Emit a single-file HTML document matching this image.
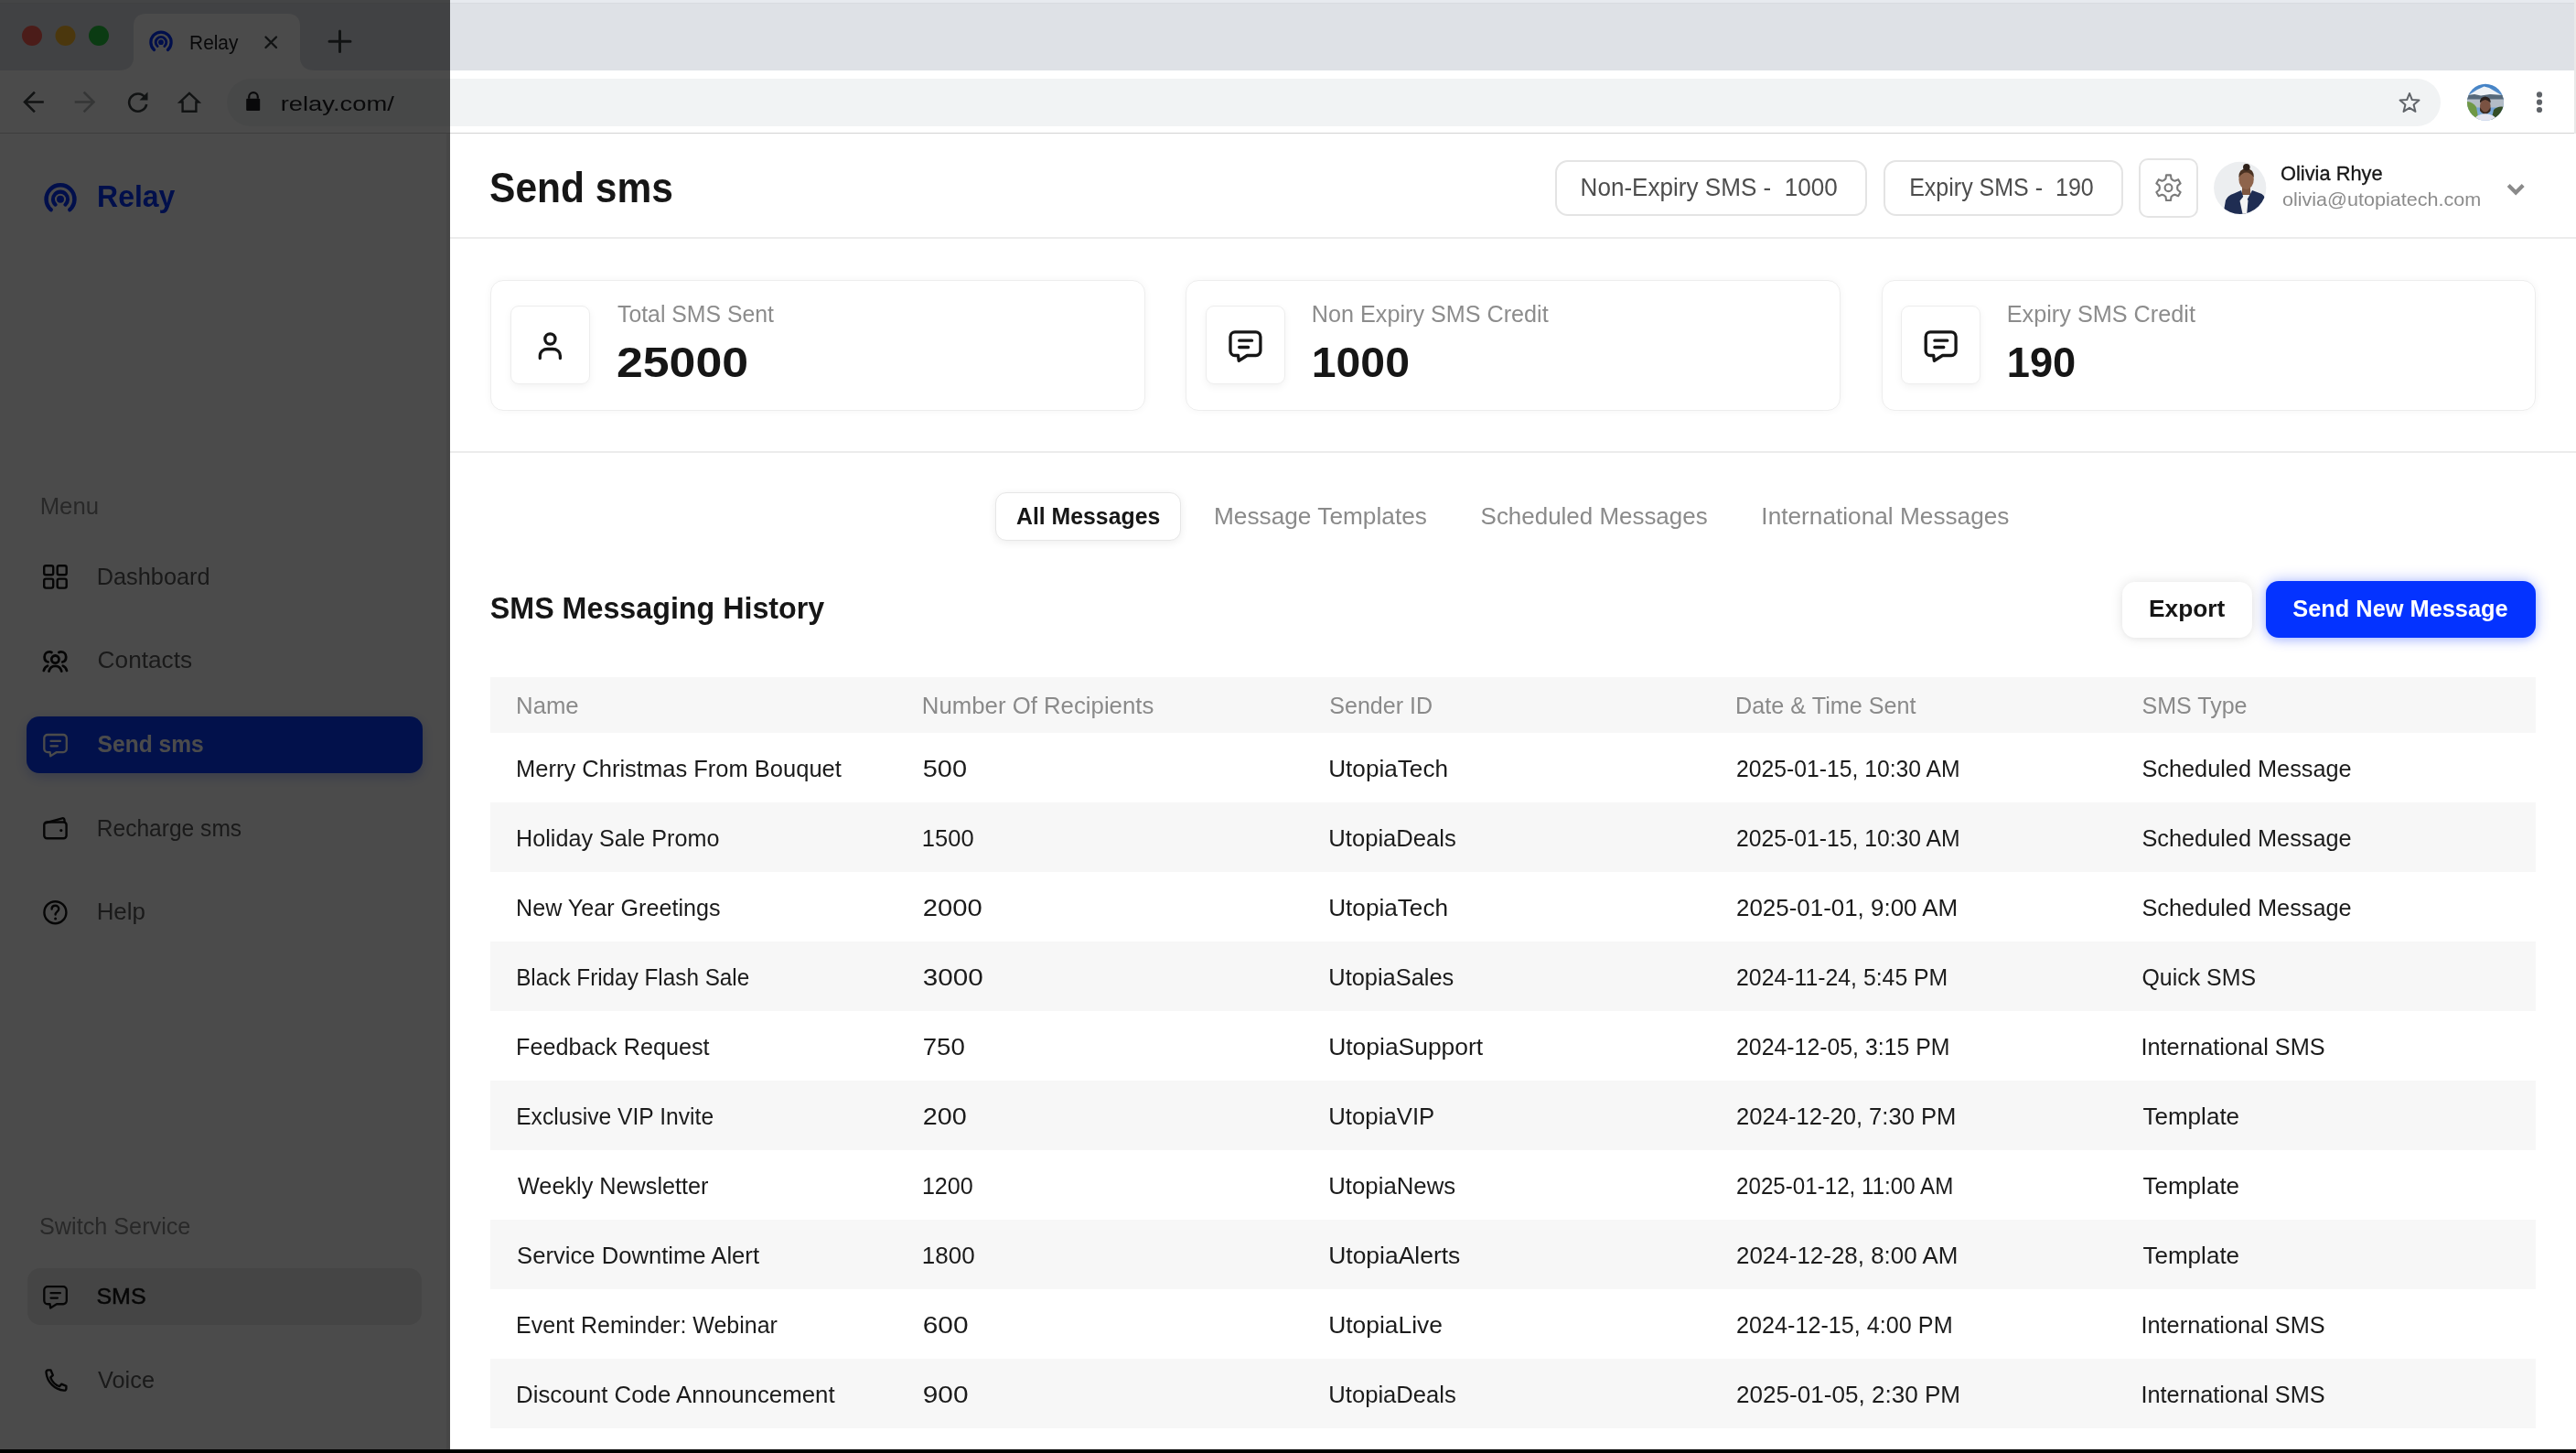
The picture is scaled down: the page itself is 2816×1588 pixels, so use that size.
<!DOCTYPE html>
<html><head><meta charset="utf-8">
<style>
html,body{margin:0;padding:0;width:2816px;height:1588px;overflow:hidden;background:#fff;font-family:"Liberation Sans",sans-serif;}
.a{position:absolute;box-sizing:border-box;}
#svg{position:absolute;left:0;top:0;will-change:transform;}
text{font-family:"Liberation Sans",sans-serif;}
</style></head><body>
<!-- browser chrome -->
<div class="a" style="left:0;top:0;width:2816px;height:77px;background:#dee1e6;"></div>
<div class="a" style="left:0;top:0;width:2816px;height:3px;background:#e7eaef;"></div><div class="a" style="left:0;top:3px;width:2816px;height:1px;background:#d8dbe0;"></div>
<div class="a" style="left:0;top:77px;width:2816px;height:69px;background:#ffffff;border-bottom:1px solid #d3d3d3;"></div>
<div class="a" style="left:248px;top:86px;width:2420px;height:52px;background:#f1f3f4;border-radius:26px;"></div>
<!-- tab -->
<svg class="a" style="left:130px;top:10px" width="215" height="70"><path d="M0 67 Q14 67 16 55 V19 Q16 5 30 5 H184 Q198 5 198 19 V55 Q200 67 214 67 V70 H0 Z" fill="#fff"/></svg>
<div class="a" style="left:2814px;top:0;width:2px;height:146px;background:#e9e9e9;"></div>
<!-- sidebar -->
<div class="a" style="left:0;top:146px;width:492px;height:1438px;background:#fff;border-right:4px solid #ececec;"></div>
<div class="a" style="left:29.3px;top:783px;width:432.7px;height:61.6px;background:#0a3cff;border-radius:14px;box-shadow:0 4px 14px rgba(4,51,255,0.25);"></div>
<div class="a" style="left:29.7px;top:1385.6px;width:431.3px;height:62.7px;background:#ebebeb;border-radius:14px;"></div>
<!-- header -->
<div class="a" style="left:492px;top:259px;width:2324px;height:1.5px;background:#ececec;"></div>
<div class="a" style="left:1699.8px;top:175px;width:341px;height:60.5px;border:2px solid #e4e4e4;border-radius:14px;"></div>
<div class="a" style="left:2058.6px;top:175px;width:262.2px;height:60.5px;border:2px solid #e4e4e4;border-radius:14px;"></div>
<div class="a" style="left:2338px;top:172.5px;width:64.6px;height:65.3px;border:2px solid #e4e4e4;border-radius:10px;"></div>
<!-- stat cards -->
<div class="a" style="left:535.5px;top:306px;width:716px;height:143px;border:1.5px solid #ededed;border-radius:14px;box-shadow:0 0 8px rgba(0,0,0,0.045);"></div>
<div class="a" style="left:1295.5px;top:306px;width:716px;height:143px;border:1.5px solid #ededed;border-radius:14px;box-shadow:0 0 8px rgba(0,0,0,0.045);"></div>
<div class="a" style="left:2056.5px;top:306px;width:715.5px;height:143px;border:1.5px solid #ededed;border-radius:14px;box-shadow:0 0 8px rgba(0,0,0,0.045);"></div>
<div class="a" style="left:558px;top:334.3px;width:86.5px;height:86px;border:1.5px solid #ededed;border-radius:9px;box-shadow:0 3px 8px rgba(0,0,0,0.05);"></div>
<div class="a" style="left:1318.2px;top:334.3px;width:86.5px;height:86px;border:1.5px solid #ededed;border-radius:9px;box-shadow:0 3px 8px rgba(0,0,0,0.05);"></div>
<div class="a" style="left:2078.4px;top:334.3px;width:86.5px;height:86px;border:1.5px solid #ededed;border-radius:9px;box-shadow:0 3px 8px rgba(0,0,0,0.05);"></div>
<div class="a" style="left:492px;top:493px;width:2324px;height:1.5px;background:#ececec;"></div>
<!-- tabs -->
<div class="a" style="left:1088px;top:537.5px;width:202.5px;height:53px;border:1.5px solid #e6e6e6;border-radius:12px;box-shadow:0 2px 10px rgba(0,0,0,0.075);background:#fff;"></div>
<!-- buttons -->
<div class="a" style="left:2320px;top:636px;width:142.3px;height:61px;border-radius:14px;background:#fff;box-shadow:0 0 14px rgba(0,0,0,0.11), 0 2px 4px rgba(0,0,0,0.03);"></div>
<div class="a" style="left:2477.3px;top:635.4px;width:294.9px;height:61.3px;border-radius:14px;background:#0433ff;box-shadow:0 0 16px rgba(4,51,255,0.33), 0 3px 8px rgba(4,51,255,0.12);"></div>
<!-- table -->
<div class="a" style="left:536px;top:740.3px;width:2236px;height:61px;background:#f7f7f7;"></div>
<div class="a" style="left:536px;top:877px;width:2236px;height:76px;background:#f7f7f7;"></div>
<div class="a" style="left:536px;top:1029px;width:2236px;height:76px;background:#f7f7f7;"></div>
<div class="a" style="left:536px;top:1181px;width:2236px;height:76px;background:#f7f7f7;"></div>
<div class="a" style="left:536px;top:1333px;width:2236px;height:76px;background:#f7f7f7;"></div>
<div class="a" style="left:536px;top:1485px;width:2236px;height:76px;background:#f7f7f7;"></div>

<svg id="svg" width="2816" height="1588" viewBox="0 0 2816 1588">
<circle cx="35" cy="39" r="11" fill="#ff5f57"/>
<circle cx="71.5" cy="39" r="11" fill="#febc2e"/>
<circle cx="108" cy="39" r="11" fill="#28c840"/>
<g fill="none" stroke="#0433ff" stroke-linecap="round"><path d="M168.56 54.47 A11.12 11.12 0 1 1 183.44 54.47" stroke-width="3.24"/><path d="M172.12 50.51 A5.80 5.80 0 1 1 179.88 50.51" stroke-width="2.95"/></g><circle cx="176" cy="46.2" r="2.88" fill="#0433ff"/>
<g stroke="#3c4043" stroke-width="2.4" stroke-linecap="round"><path d="M290.5 40.5 L302 52 M302 40.5 L290.5 52"/></g>
<g stroke="#3c4043" stroke-width="3" stroke-linecap="round"><path d="M371.5 34 V56.5 M360 45.2 H383"/></g>
<g fill="none" stroke="#3c4043" stroke-width="2.6" stroke-linecap="square"><path d="M27.5 111.5 H46.5 M37 101.5 L27 111.5 L37 121.5"/></g>
<g fill="none" stroke="#b4b6b8" stroke-width="2.6" stroke-linecap="square"><path d="M83 111.5 H102 M92.5 101.5 L102.5 111.5 L92.5 121.5"/></g>
<g fill="none" stroke="#3c4043" stroke-width="2.6"><path d="M158.6 106.5 A9.6 9.6 0 1 0 160.2 114"/></g><path d="M161.5 100.5 V109.5 H152.5 Z" fill="#3c4043"/>
<g fill="none" stroke="#3c4043" stroke-width="2.4" stroke-linejoin="miter"><path d="M207 101.8 L196.8 111.5 H199.6 V121.8 H214.4 V111.5 H217.2 Z"/></g>
<path d="M272.2 107.8 V106 A4.8 4.8 0 0 1 281.8 106 V107.8" fill="none" stroke="#202124" stroke-width="2.2"/><rect x="269.2" y="107.8" width="15" height="13.1" rx="1" fill="#202124"/>
<polygon points="2634.00,102.00 2636.82,109.12 2644.46,109.60 2638.57,114.48 2640.47,121.90 2634.00,117.80 2627.53,121.90 2629.43,114.48 2623.54,109.60 2631.18,109.12" fill="none" stroke="#5f6368" stroke-width="2" stroke-linejoin="round"/>
<defs><clipPath id="cav"><circle cx="2717" cy="111.7" r="20"/></clipPath>
<clipPath id="uav"><circle cx="2448.7" cy="205.3" r="28.6"/></clipPath>
<linearGradient id="sky" x1="0" y1="0" x2="0" y2="1"><stop offset="0" stop-color="#3f7fc4"/><stop offset="1" stop-color="#8fb6de"/></linearGradient></defs>
<g clip-path="url(#cav)">
<rect x="2696" y="91" width="42" height="42" fill="url(#sky)"/>
<path d="M2697 105 L2708 98 L2715.5 94.5 L2721 96 L2737 105.5 V107 H2697 Z" fill="#eef2f6"/>
<path d="M2696 104 L2705 103 L2712 104.5 L2722 103 L2738 104 V109 H2696 Z" fill="#56697a"/>
<rect x="2696" y="108.5" width="42" height="9" fill="#b3bcc6"/>
<path d="M2696 111 Q2703 111 2707 117 L2710 133 H2696 Z" fill="#6f9846"/>
<path d="M2738 117 Q2731 115 2726 120 L2723 133 H2738 Z" fill="#344d26"/>
<ellipse cx="2716.8" cy="116" rx="5.8" ry="8.3" fill="#7a5242"/>
<path d="M2711 112.5 Q2710.5 106 2716.8 105.5 Q2723 106 2722.6 112.5 Q2719.5 109 2716.8 109 Q2714 109 2711 112.5 Z" fill="#2a201c"/>
<path d="M2711 117 Q2716.8 128 2722.6 117 L2722.6 121 Q2716.8 128.5 2711 121 Z" fill="#3a2a22"/>
<path d="M2703 134 Q2705 124.8 2716.8 124.3 Q2729 124.8 2731 134 Z" fill="#e4e4f0"/>
</g>
<circle cx="2776" cy="103.4" r="3.1" fill="#5f6368"/>
<circle cx="2776" cy="111.7" r="3.1" fill="#5f6368"/>
<circle cx="2776" cy="120" r="3.1" fill="#5f6368"/>
<polygon points="2365.70,196.89 2367.49,195.35 2368.07,191.41 2372.93,191.41 2373.51,195.35 2375.30,196.89 2377.52,197.67 2381.22,196.20 2383.66,200.41 2380.54,202.88 2380.10,205.20 2380.54,207.52 2383.66,209.99 2381.22,214.20 2377.52,212.73 2375.30,213.51 2373.51,215.05 2372.93,218.99 2368.07,218.99 2367.49,215.05 2365.70,213.51 2363.48,212.73 2359.78,214.20 2357.34,209.99 2360.46,207.52 2360.90,205.20 2360.46,202.88 2357.34,200.41 2359.78,196.20 2363.48,197.67" fill="none" stroke="#7a7a7a" stroke-width="2.1" stroke-linejoin="round"/>
<circle cx="2370.5" cy="205.2" r="3.9" fill="none" stroke="#7a7a7a" stroke-width="2.1"/>
<circle cx="2448.7" cy="205.3" r="28.6" fill="#eceef0"/>
<g clip-path="url(#uav)">
<rect x="2451" y="203" width="9" height="10" fill="#7e5640"/>
<ellipse cx="2455.6" cy="196" rx="8.2" ry="11" fill="#8e644c"/>
<path d="M2447.4 194 Q2447 184.5 2455.6 184.3 Q2464.2 184.5 2463.8 194 Q2460 188.5 2455.6 188.5 Q2451.2 188.5 2447.4 194 Z" fill="#4a3222"/>
<circle cx="2455.8" cy="182.8" r="3.8" fill="#2f221b"/>
<path d="M2430 236 L2433 219 Q2435 213.5 2442 211.5 L2450 208 L2454.5 222 L2462 208 L2470 211 Q2475.5 212.5 2477 219 L2476 236 Z" fill="#1f2d52"/>
<path d="M2448.5 219.5 L2452 236 L2456 236 L2457.5 219 L2453 214 Z" fill="#f3f3f3"/>
</g>
<path d="M2742.2 202.6 L2750.2 210.6 L2758.2 202.6" fill="none" stroke="#8a8a8a" stroke-width="4.2" stroke-linecap="butt" stroke-linejoin="miter"/>
<g transform="translate(601.4 370.5) scale(1)" fill="none" stroke="#161616" stroke-width="3.3" stroke-linecap="round"><circle cx="0" cy="0" r="5.6"/><path d="M-11.1 21 V18.5 C-11.1 14 -7.5 11 -2.5 11 H2.5 C7.5 11 11 14 11 18.5 V21"/></g>
<g transform="translate(1330 350) scale(1)" fill="none" stroke="#161616" stroke-width="3.3" stroke-linecap="round" stroke-linejoin="round"><path d="M33.3 38.5 H42.9 A5 5 0 0 0 47.9 33.5 V17.9 A5 5 0 0 0 42.9 12.9 H20 A5 5 0 0 0 15 17.9 V33.5 A5 5 0 0 0 20 38.5 H23.5 L24.2 44.3 Z"/><path d="M24.7 22.2 H38.6 M24.7 29.5 H34.6"/></g>
<g transform="translate(2090.2 350) scale(1)" fill="none" stroke="#161616" stroke-width="3.3" stroke-linecap="round" stroke-linejoin="round"><path d="M33.3 38.5 H42.9 A5 5 0 0 0 47.9 33.5 V17.9 A5 5 0 0 0 42.9 12.9 H20 A5 5 0 0 0 15 17.9 V33.5 A5 5 0 0 0 20 38.5 H23.5 L24.2 44.3 Z"/><path d="M24.7 22.2 H38.6 M24.7 29.5 H34.6"/></g>
<g transform="translate(-430.19999999999993 -1000) scale(1)" fill="none" stroke="#161616" stroke-width="3.3" stroke-linecap="round" stroke-linejoin="round"><path d="M33.3 38.5 H42.9 A5 5 0 0 0 47.9 33.5 V17.9 A5 5 0 0 0 42.9 12.9 H20 A5 5 0 0 0 15 17.9 V33.5 A5 5 0 0 0 20 38.5 H23.5 L24.2 44.3 Z"/><path d="M24.7 22.2 H38.6 M24.7 29.5 H34.6"/></g>
<g fill="none" stroke="#0433ff" stroke-linecap="round"><path d="M55.66 229.18 A15.45 15.45 0 1 1 76.34 229.18" stroke-width="4.50"/><path d="M60.61 223.68 A8.05 8.05 0 1 1 71.39 223.68" stroke-width="4.10"/></g><circle cx="66" cy="217.7" r="4.00" fill="#0433ff"/>
<g fill="none" stroke="#161616" stroke-width="2.4"><rect x="48.2" y="618.2" width="10" height="10" rx="2"/><rect x="62.7" y="618.2" width="10" height="10" rx="2"/><rect x="48.2" y="632.6" width="10" height="10" rx="2"/><rect x="62.7" y="632.6" width="10" height="10" rx="2"/></g>
<g fill="none" stroke="#161616" stroke-width="2.8" stroke-linecap="round"><circle cx="60.4" cy="720.6" r="4.1"/><path d="M53.5 733.6 C54.5 729.5 57 727.8 60.4 727.8 C63.8 727.8 66.3 729.5 67.3 733.6"/><path d="M52.6 723.5 C50 723 48.6 721 48.6 718 C48.6 714.5 51 712.4 54.2 712.4 C55 712.4 55.8 712.6 56.4 713"/><path d="M68.2 723.5 C70.8 723 72.2 721 72.2 718 C72.2 714.5 69.8 712.4 66.6 712.4 C65.8 712.4 65 712.6 64.4 713"/><path d="M47.8 733 C48.5 730.3 50 728.5 52 727.8 M73 733 C72.3 730.3 70.8 728.5 68.8 727.8"/></g>
<g transform="translate(37.125 793.3895) scale(0.745)" fill="none" stroke="#ffffff" stroke-width="3.1" stroke-linecap="round" stroke-linejoin="round"><path d="M33.3 38.5 H42.9 A5 5 0 0 0 47.9 33.5 V17.9 A5 5 0 0 0 42.9 12.9 H20 A5 5 0 0 0 15 17.9 V33.5 A5 5 0 0 0 20 38.5 H23.5 L24.2 44.3 Z"/><path d="M24.7 22.2 H38.6 M24.7 29.5 H34.6"/></g>
<g fill="none" stroke="#161616" stroke-width="2.4" stroke-linejoin="round"><rect x="48.3" y="898.5" width="24.3" height="17.7" rx="3"/><path d="M49.5 899.5 L68 894.3 C69.5 893.9 70.5 895 70.5 896.5 V898.5"/></g><circle cx="66.8" cy="907.6" r="1.6" fill="#161616"/>
<g fill="none" stroke="#161616" stroke-width="2.4" stroke-linecap="round"><circle cx="60.4" cy="997.2" r="12"/><path d="M56.6 993.6 C56.6 991.2 58.3 989.8 60.5 989.8 C62.7 989.8 64.3 991.3 64.3 993.3 C64.3 996.2 60.6 996.5 60.6 999.6"/></g><circle cx="60.6" cy="1004" r="1.5" fill="#161616"/>
<g transform="translate(37.125 1396.5895) scale(0.745)" fill="none" stroke="#161616" stroke-width="3.1" stroke-linecap="round" stroke-linejoin="round"><path d="M33.3 38.5 H42.9 A5 5 0 0 0 47.9 33.5 V17.9 A5 5 0 0 0 42.9 12.9 H20 A5 5 0 0 0 15 17.9 V33.5 A5 5 0 0 0 20 38.5 H23.5 L24.2 44.3 Z"/><path d="M24.7 22.2 H38.6 M24.7 29.5 H34.6"/></g>
<g fill="none" stroke="#161616" stroke-width="2.4" stroke-linejoin="round"><path d="M52.5 1497.4 L55.5 1497.4 L57.8 1503 L55.2 1505.3 C56.8 1509.8 60.6 1513.6 65 1515.2 L67.3 1512.6 L72.4 1514.8 L72.4 1517.6 C72.4 1519 71.2 1519.8 70 1519.6 C59.5 1518.5 51.6 1510.5 50.5 1500 C50.3 1498.6 51.2 1497.4 52.5 1497.4 Z"/></g>
<text transform="translate(207.08 53.60) scale(0.9202 1)" font-size="22.67" font-weight="400" fill="#202124">Relay</text>
<text transform="translate(306.70 120.90) scale(1.2005 1)" font-size="22.80" font-weight="400" fill="#202124">relay.com/</text>
<text transform="translate(535.09 220.50) scale(0.9085 1)" font-size="46.80" font-weight="700" fill="#161616">Send sms</text>
<text transform="translate(1727.58 213.50) scale(0.9603 1)" font-size="27.18" font-weight="400" fill="#4d4d4d" xml:space="preserve">Non-Expiry SMS -  1000</text>
<text transform="translate(2087.16 213.50) scale(0.9209 1)" font-size="27.18" font-weight="400" fill="#4d4d4d" xml:space="preserve">Expiry SMS -  190</text>
<text transform="translate(2492.98 197.00) scale(1.0160 1)" font-size="21.51" font-weight="400" fill="#161616" stroke="#161616" stroke-width="0.3">Olivia Rhye</text>
<text transform="translate(2494.90 224.70) scale(1.0527 1)" font-size="20.50" font-weight="400" fill="#8c8c8c">olivia@utopiatech.com</text>
<text transform="translate(675.00 352.30) scale(0.9706 1)" font-size="25.58" font-weight="400" fill="#8c8c8c">Total SMS Sent</text>
<text transform="translate(673.88 412.00) scale(1.1151 1)" font-size="46.51" font-weight="700" fill="#161616">25000</text>
<text transform="translate(1433.83 352.30) scale(0.9848 1)" font-size="25.58" font-weight="400" fill="#8c8c8c">Non Expiry SMS Credit</text>
<text transform="translate(1433.73 412.00) scale(1.0363 1)" font-size="46.51" font-weight="700" fill="#161616">1000</text>
<text transform="translate(2193.72 352.30) scale(0.9878 1)" font-size="25.58" font-weight="400" fill="#8c8c8c">Expiry SMS Credit</text>
<text transform="translate(2193.75 412.00) scale(0.9726 1)" font-size="46.51" font-weight="700" fill="#161616">190</text>
<text transform="translate(1111.00 572.50) scale(0.9652 1)" font-size="25.73" font-weight="700" fill="#161616">All Messages</text>
<text transform="translate(1326.96 572.50) scale(1.0206 1)" font-size="25.73" font-weight="400" fill="#8a8a8a">Message Templates</text>
<text transform="translate(1618.59 572.50) scale(1.0088 1)" font-size="25.73" font-weight="400" fill="#8a8a8a">Scheduled Messages</text>
<text transform="translate(1925.36 572.50) scale(1.0196 1)" font-size="25.73" font-weight="400" fill="#8a8a8a">International Messages</text>
<text transform="translate(535.80 675.90) scale(0.9777 1)" font-size="32.99" font-weight="700" fill="#161616">SMS Messaging History</text>
<text transform="translate(2348.95 674.00) scale(1.0473 1)" font-size="25.15" font-weight="700" fill="#161616">Export</text>
<text transform="translate(2506.30 674.00) scale(1.0088 1)" font-size="25.15" font-weight="700" fill="#ffffff">Send New Message</text>
<text transform="translate(564.05 780.00) scale(0.9732 1)" font-size="26.45" font-weight="400" fill="#8a8a8a">Name</text>
<text transform="translate(1007.85 780.00) scale(0.9742 1)" font-size="26.45" font-weight="400" fill="#8a8a8a">Number Of Recipients</text>
<text transform="translate(1453.25 780.00) scale(0.9483 1)" font-size="26.45" font-weight="400" fill="#8a8a8a">Sender ID</text>
<text transform="translate(1897.09 780.00) scale(0.9529 1)" font-size="26.45" font-weight="400" fill="#8a8a8a">Date &amp; Time Sent</text>
<text transform="translate(2341.45 780.00) scale(0.9472 1)" font-size="26.45" font-weight="400" fill="#8a8a8a">SMS Type</text>
<text transform="translate(564.06 848.50) scale(0.9702 1)" font-size="26.31" font-weight="400" fill="#1b1b1b">Merry Christmas From Bouquet</text>
<text transform="translate(1008.70 848.50) scale(1.1006 1)" font-size="26.31" font-weight="400" fill="#1b1b1b">500</text>
<text transform="translate(1452.21 848.50) scale(0.9943 1)" font-size="26.31" font-weight="400" fill="#1b1b1b">UtopiaTech</text>
<text transform="translate(1898.06 848.50) scale(0.9402 1)" font-size="26.31" font-weight="400" fill="#1b1b1b">2025-01-15, 10:30 AM</text>
<text transform="translate(2341.44 848.50) scale(0.9621 1)" font-size="26.31" font-weight="400" fill="#1b1b1b">Scheduled Message</text>
<text transform="translate(564.09 924.50) scale(0.9562 1)" font-size="26.31" font-weight="400" fill="#1b1b1b">Holiday Sale Promo</text>
<text transform="translate(1007.86 924.50) scale(0.9700 1)" font-size="26.31" font-weight="400" fill="#1b1b1b">1500</text>
<text transform="translate(1452.25 924.50) scale(0.9745 1)" font-size="26.31" font-weight="400" fill="#1b1b1b">UtopiaDeals</text>
<text transform="translate(1898.06 924.50) scale(0.9402 1)" font-size="26.31" font-weight="400" fill="#1b1b1b">2025-01-15, 10:30 AM</text>
<text transform="translate(2341.44 924.50) scale(0.9621 1)" font-size="26.31" font-weight="400" fill="#1b1b1b">Scheduled Message</text>
<text transform="translate(564.09 1000.50) scale(0.9547 1)" font-size="26.31" font-weight="400" fill="#1b1b1b">New Year Greetings</text>
<text transform="translate(1008.69 1000.50) scale(1.1112 1)" font-size="26.31" font-weight="400" fill="#1b1b1b">2000</text>
<text transform="translate(1452.21 1000.50) scale(0.9943 1)" font-size="26.31" font-weight="400" fill="#1b1b1b">UtopiaTech</text>
<text transform="translate(1898.01 1000.50) scale(0.9859 1)" font-size="26.31" font-weight="400" fill="#1b1b1b">2025-01-01, 9:00 AM</text>
<text transform="translate(2341.44 1000.50) scale(0.9621 1)" font-size="26.31" font-weight="400" fill="#1b1b1b">Scheduled Message</text>
<text transform="translate(564.15 1076.50) scale(0.9236 1)" font-size="26.31" font-weight="400" fill="#1b1b1b">Black Friday Flash Sale</text>
<text transform="translate(1008.67 1076.50) scale(1.1288 1)" font-size="26.31" font-weight="400" fill="#1b1b1b">3000</text>
<text transform="translate(1452.27 1076.50) scale(0.9667 1)" font-size="26.31" font-weight="400" fill="#1b1b1b">UtopiaSales</text>
<text transform="translate(1898.06 1076.50) scale(0.9434 1)" font-size="26.31" font-weight="400" fill="#1b1b1b">2024-11-24, 5:45 PM</text>
<text transform="translate(2341.45 1076.50) scale(0.9479 1)" font-size="26.31" font-weight="400" fill="#1b1b1b">Quick SMS</text>
<text transform="translate(564.09 1152.50) scale(0.9575 1)" font-size="26.31" font-weight="400" fill="#1b1b1b">Feedback Request</text>
<text transform="translate(1008.75 1152.50) scale(1.0509 1)" font-size="26.31" font-weight="400" fill="#1b1b1b">750</text>
<text transform="translate(1452.19 1152.50) scale(1.0053 1)" font-size="26.31" font-weight="400" fill="#1b1b1b">UtopiaSupport</text>
<text transform="translate(1898.06 1152.50) scale(0.9445 1)" font-size="26.31" font-weight="400" fill="#1b1b1b">2024-12-05, 3:15 PM</text>
<text transform="translate(2340.47 1152.50) scale(0.9628 1)" font-size="26.31" font-weight="400" fill="#1b1b1b">International SMS</text>
<text transform="translate(564.13 1228.50) scale(0.9374 1)" font-size="26.31" font-weight="400" fill="#1b1b1b">Exclusive VIP Invite</text>
<text transform="translate(1008.71 1228.50) scale(1.0935 1)" font-size="26.31" font-weight="400" fill="#1b1b1b">200</text>
<text transform="translate(1452.24 1228.50) scale(0.9796 1)" font-size="26.31" font-weight="400" fill="#1b1b1b">UtopiaVIP</text>
<text transform="translate(1898.03 1228.50) scale(0.9732 1)" font-size="26.31" font-weight="400" fill="#1b1b1b">2024-12-20, 7:30 PM</text>
<text transform="translate(2342.40 1228.50) scale(0.9908 1)" font-size="26.31" font-weight="400" fill="#1b1b1b">Template</text>
<text transform="translate(566.00 1304.50) scale(0.9600 1)" font-size="26.31" font-weight="400" fill="#1b1b1b">Weekly Newsletter</text>
<text transform="translate(1007.89 1304.50) scale(0.9557 1)" font-size="26.31" font-weight="400" fill="#1b1b1b">1200</text>
<text transform="translate(1452.24 1304.50) scale(0.9798 1)" font-size="26.31" font-weight="400" fill="#1b1b1b">UtopiaNews</text>
<text transform="translate(1898.08 1304.50) scale(0.9181 1)" font-size="26.31" font-weight="400" fill="#1b1b1b">2025-01-12, 11:00 AM</text>
<text transform="translate(2342.40 1304.50) scale(0.9908 1)" font-size="26.31" font-weight="400" fill="#1b1b1b">Template</text>
<text transform="translate(565.03 1380.50) scale(0.9748 1)" font-size="26.31" font-weight="400" fill="#1b1b1b">Service Downtime Alert</text>
<text transform="translate(1007.82 1380.50) scale(0.9879 1)" font-size="26.31" font-weight="400" fill="#1b1b1b">1800</text>
<text transform="translate(1452.19 1380.50) scale(1.0058 1)" font-size="26.31" font-weight="400" fill="#1b1b1b">UtopiaAlerts</text>
<text transform="translate(1898.01 1380.50) scale(0.9867 1)" font-size="26.31" font-weight="400" fill="#1b1b1b">2024-12-28, 8:00 AM</text>
<text transform="translate(2342.40 1380.50) scale(0.9908 1)" font-size="26.31" font-weight="400" fill="#1b1b1b">Template</text>
<text transform="translate(564.10 1456.50) scale(0.9510 1)" font-size="26.31" font-weight="400" fill="#1b1b1b">Event Reminder: Webinar</text>
<text transform="translate(1008.66 1456.50) scale(1.1361 1)" font-size="26.31" font-weight="400" fill="#1b1b1b">600</text>
<text transform="translate(1452.19 1456.50) scale(1.0039 1)" font-size="26.31" font-weight="400" fill="#1b1b1b">UtopiaLive</text>
<text transform="translate(1898.04 1456.50) scale(0.9572 1)" font-size="26.31" font-weight="400" fill="#1b1b1b">2024-12-15, 4:00 PM</text>
<text transform="translate(2340.47 1456.50) scale(0.9628 1)" font-size="26.31" font-weight="400" fill="#1b1b1b">International SMS</text>
<text transform="translate(564.04 1532.50) scale(0.9812 1)" font-size="26.31" font-weight="400" fill="#1b1b1b">Discount Code Announcement</text>
<text transform="translate(1008.66 1532.50) scale(1.1361 1)" font-size="26.31" font-weight="400" fill="#1b1b1b">900</text>
<text transform="translate(1452.25 1532.50) scale(0.9745 1)" font-size="26.31" font-weight="400" fill="#1b1b1b">UtopiaDeals</text>
<text transform="translate(1898.01 1532.50) scale(0.9920 1)" font-size="26.31" font-weight="400" fill="#1b1b1b">2025-01-05, 2:30 PM</text>
<text transform="translate(2340.47 1532.50) scale(0.9628 1)" font-size="26.31" font-weight="400" fill="#1b1b1b">International SMS</text>
<text transform="translate(106.06 225.80) scale(0.9692 1)" font-size="32.99" font-weight="700" fill="#0433ff">Relay</text>
<text transform="translate(43.64 561.60) scale(1.0313 1)" font-size="25.00" font-weight="400" fill="#8a8a8a">Menu</text>
<text transform="translate(105.68 638.70) scale(0.9584 1)" font-size="26.45" font-weight="400" fill="#585858">Dashboard</text>
<text transform="translate(106.61 730.20) scale(0.9921 1)" font-size="26.45" font-weight="400" fill="#585858">Contacts</text>
<text transform="translate(106.60 821.80) scale(0.9501 1)" font-size="25.87" font-weight="700" fill="#ffffff">Send sms</text>
<text transform="translate(105.74 913.80) scale(0.9297 1)" font-size="26.45" font-weight="400" fill="#585858">Recharge sms</text>
<text transform="translate(105.64 1004.90) scale(0.9812 1)" font-size="26.45" font-weight="400" fill="#585858">Help</text>
<text transform="translate(43.03 1348.60) scale(0.9697 1)" font-size="26.02" font-weight="400" fill="#8a8a8a">Switch Service</text>
<text transform="translate(105.39 1424.90) scale(1.0143 1)" font-size="24.71" font-weight="400" fill="#161616" stroke="#161616" stroke-width="0.5">SMS</text>
<text transform="translate(107.00 1517.00) scale(0.9694 1)" font-size="26.16" font-weight="400" fill="#585858">Voice</text>
</svg>
<!-- overlay -->
<div class="a" style="left:0;top:0;width:492px;height:1588px;background:rgba(0,0,0,0.706);"></div>
<div class="a" style="left:0;top:1584px;width:2816px;height:4px;background:#000;"></div>
</body></html>
